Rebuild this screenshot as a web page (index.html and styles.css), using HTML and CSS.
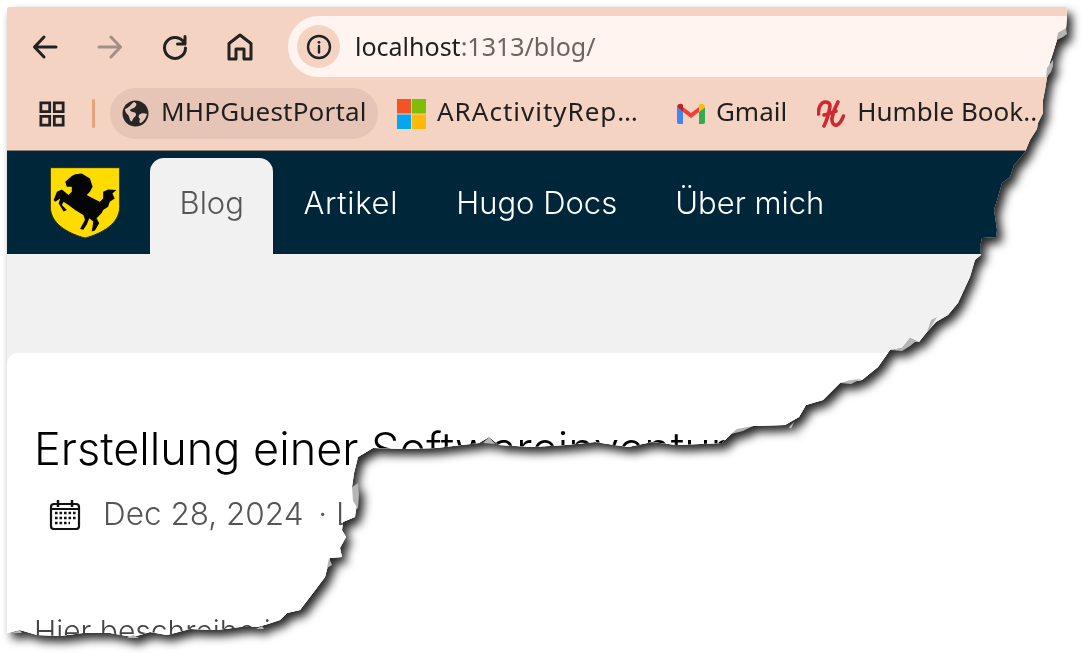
FILE: index.html
```html
<!DOCTYPE html>
<html lang="de">
<head>
<meta charset="utf-8">
<title>Blog</title>
<link rel="stylesheet" href="styles.css">
</head>
<body>
<div class="shadow">
  <div class="torn">
    <div class="sheet">
      <header class="chrome">
        <div class="toolbar">
          <span class="tb-btn"><svg width="30" height="30" viewBox="0 0 30 30"><path class="ic" d="M26 15H5M14 5 4.500 15 14 25"/></svg></span>
          <span class="tb-btn dim"><svg width="30" height="30" viewBox="0 0 30 30"><path class="ic" d="M4 15h21M16 5l9.500 10L16 25"/></svg></span>
          <span class="tb-btn"><svg width="30" height="30" viewBox="0 0 30 30"><path class="ic" d="M24 10.500A10.500 10.500 0 1 0 25.500 16M25 4.500v7.500h-7.500"/></svg></span>
          <span class="tb-btn"><svg width="30" height="30" viewBox="0 0 30 30"><path class="ic" d="M4 27V11.500L15 3l11 8.500V27h-7V17h-8v10Z"/></svg></span>
          <div class="omnibox">
            <span class="site-info"><svg width="26" height="26" viewBox="0 0 26 26"><circle class="ic thin" cx="13" cy="13" r="11"/><path class="ic thin" d="M13 12v6.500"/><circle cx="13" cy="8.300" r="1.400" fill="#222"/></svg></span>
            <span class="url">localhost<span class="url-rest">:1313/blog/</span></span>
          </div>
        </div>
        <div class="bookmarks">
          <span class="apps"><svg width="26" height="26" viewBox="0 0 28 28"><path class="ic thin sq" d="M2 2h9.500v9.500H2zM16.500 2H26v9.500h-9.500zM2 16.500h9.500V26H2zM16.500 16.500H26V26h-9.500z"/></svg></span>
          <span class="sep"></span>
          <span class="bm chip"><svg width="27" height="27" viewBox="0 0 27 27"><circle cx="13.500" cy="13.500" r="13" fill="#262626"/><path d="M3 9c4-1 6-5 9-7 3 1 3 3 1 5-1 2-4 1-5 3 1 3 5 1 6 4 0 3-2 3-3 5-1 3-2 3-3 1-1-3-1-5-3-6-1-1-2-3-2-5ZM17 15c2-2 5-2 8-1-1 4-3 7-6 9-3 0-1-3-1-4-1-1-2-2-1-4Z" fill="#e6c5b6"/></svg><span class="label">MHPGuestPortal</span></span>
          <span class="bm ms"><svg width="29" height="30" viewBox="0 0 29 30"><rect width="14" height="14.500" fill="#f35325"/><rect x="15" width="14" height="14.500" fill="#81bc06"/><rect y="15.500" width="14" height="14.500" fill="#05a6f0"/><rect x="15" y="15.500" width="14" height="14.500" fill="#ffba08"/></svg><span class="label ms-label">ARActivityRep…</span></span>
          <span class="bm gm"><svg width="28" height="22" viewBox="0 0 28 22"><path d="M0 4v15q0 2 2 2h4V9Z" fill="#4285f4"/><path d="M28 4v15q0 2-2 2h-4V9Z" fill="#34a853"/><path d="M6 9v-5l8 6 8-6v5l-8 6Z" fill="#ea4335"/><path d="M0 4q1-4 5-3l1 1v7L0 4Z" fill="#c5221f"/><path d="M28 4q-1-4-5-3l-1 1v7l6-5Z" fill="#fbbc04"/></svg><span class="label">Gmail</span></span>
          <span class="bm hb"><svg width="28" height="28" viewBox="0 0 28 28"><path d="M1.500 14C1 8 4 2 8 2c3 0 5 1 5 4-1 7-3 14-6 20M21 2c-3 5-5 11-6 16-.5 5 2 8 5 7 3-1 5-5 6.500-9M7 15c4-1 9-3 12-4" fill="none" stroke="#cc2a2e" stroke-width="3.600" stroke-linecap="round"/></svg><span class="label">Humble Book..</span></span>
        </div>
      </header>
      <nav class="nav">
        <svg class="logo" width="70" height="72" viewBox="29 21 212 216"><path d="M30 22h210v118c0 50-50 80-105 95-55-15-105-45-105-95Z" fill="#ffdc00" stroke="#2b2a10" stroke-width="3"/><path d="M75 65 95 47l10-5 20-2 25 15 8 25-8 15-10 10 20 10 20 10 10-10v-20l15-7 25 2-12 10 7 15-15 10-5 15-15 10-5 10-15 15 8 15-13 22-10 3 3-15 2-15-12-10-8 20-10 15-10-2 15-28-5-15-25-15-20-15-15-10-5 10 15 15-10 5-15-25 5-15-15 10-5-5 10-25 15-7 20 17 10-10v-15l-15 0Z" fill="#050505"/></svg>
        <a class="tab active">Blog</a>
        <a class="tab wide">Artikel</a>
        <a class="tab">Hugo Docs</a>
        <a class="tab">Über mich</a>
      </nav>
      <main class="main">
        <article class="card">
          <h1 class="title">Erstellung einer Softwareinventur</h1>
          <div class="meta">
            <svg width="32" height="32" viewBox="0 0 32 32"><path d="M2 9q0-3 3-3h22q3 0 3 3v19q0 3-3 3H5q-3 0-3-3Z" fill="none" stroke="#111" stroke-width="2.200"/><path d="M2 11h28" stroke="#111" stroke-width="2"/><path d="M9 2v7M23 2v7" stroke="#111" stroke-width="2.500"/><path d="M6 15h21M6 20h21M6 25h15" stroke="#111" stroke-width="2.600" stroke-dasharray="2.600 1.900"/></svg>
            <span>Dec 28, 2024 <span class="dot">· Lesedauer: 3 Minuten</span></span>
          </div>
          <p class="text">Hier beschreibe ich, wie eine Softwareinventur erstellt wird.</p>
        </article>
      </main>
    </div>
  </div>
  <svg class="slivers" width="1090" height="661" viewBox="0 0 1090 661"><path d="M1066 28l-8 5-1 7 6-3 4-3ZM1053 60l-6 8-1 10 5-6 2-6ZM358 483l-6 4 1 14 5 8 1-14ZM329 558l-2 10 5-3ZM919 342l-9-4-8 10-12 2 12 1 8-5 5-4ZM927 332l4-12 6-3-6 10ZM840 383l11-3 10-1-10 5ZM753 426l-16 3-6 5 12-3ZM789 427l5-5-3 7ZM489 437l-6 6 12 1ZM560 444l-10 2 16-3ZM20 630l-8 3 10 0ZM133 635l-6 3 12 0ZM262 626l-6 3 8 0Z" fill="#b5b5b5"/></svg>
</div>
</body>
</html>
```
FILE: styles.css
```css
* { box-sizing: border-box; }
html, body { margin: 0; height: 100%; background: #fff; overflow: hidden; }
.shadow {
  position: relative;
  width: 1090px;
  height: 661px;
  filter: drop-shadow(5px 6px 5px rgba(0, 0, 0, 0.85));
}
.torn {
  width: 1090px;
  height: 661px;
  padding: 7px 0 0 7px;
  clip-path: polygon(0 0, 1065px 0, 1067px 15px, 1066px 29px, 1058px 33px, 1057px 40px, 1053px 53px, 1050px 62px, 1047px 78px, 1045px 90px, 1043px 100px, 1043px 113px, 1038px 123px, 1037px 129px, 1030px 140px, 1025px 152px, 1020px 158px, 1014px 165px, 1010px 177px, 1002px 183px, 998px 197px, 994px 210px, 997px 230px, 996px 237px, 982px 238px, 980px 247px, 981px 255px, 975px 260px, 970px 277px, 964px 290px, 958px 303px, 948px 315px, 936px 322px, 927px 332px, 919px 342px, 910px 338px, 902px 348px, 890px 350px, 878px 367px, 862px 380px, 840px 383px, 823px 400px, 806px 405px, 799px 417px, 785px 425px, 753px 426px, 732px 433px, 722px 443px, 700px 444px, 677px 445px, 652px 442px, 628px 447px, 595px 442px, 566px 445px, 532px 447px, 499px 445px, 489px 437px, 479px 443px, 436px 448px, 407px 449px, 373px 448px, 358px 457px, 354px 473px, 352px 487px, 358px 497px, 355px 517px, 343px 522px, 342px 530px, 346px 537px, 340px 548px, 342px 557px, 330px 558px, 325px 577px, 313px 593px, 300px 610px, 287px 613px, 280px 620px, 268px 624px, 257px 627px, 240px 627px, 217px 630px, 190px 629px, 167px 635px, 150px 632px, 133px 637px, 110px 633px, 83px 633px, 60px 636px, 37px 635px, 20px 630px, 7px 633px, 0 640px);
}
.sheet { width: 1083px; height: 654px; overflow: hidden; background: #fff; border-top-left-radius: 2px; }

.chrome { background: #f4d3c3; height: 144px; padding-top: 9px; border-bottom: 1px solid #8f8079; font-family: "Noto Sans", sans-serif; color: #1f1f1f; }
.toolbar { display: flex; align-items: center; height: 61px; padding-left: 23px; }
.tb-btn { width: 65px; display: flex; justify-content: flex-start; }
.tb-btn.dim { opacity: 0.38; }
.ic { fill: none; stroke: #222; stroke-width: 3; stroke-linecap: round; stroke-linejoin: round; }
.ic.thin { stroke-width: 2.400; }
.ic.sq { stroke-linecap: butt; stroke-linejoin: miter; stroke-width: 3; }
.omnibox { flex: 1; display: flex; align-items: center; height: 61px; margin-left: -2px; background: #fff4f0; border-radius: 31px 0 0 31px; padding-left: 9px; gap: 15px; }
.site-info { width: 43px; height: 43px; border-radius: 50%; background: #f4d3c3; display: flex; align-items: center; justify-content: center; }
.url { font-size: 25px; padding-bottom: 2px; }
.url-rest { color: #6b6461; }

.bookmarks { display: flex; align-items: center; height: 51px; margin-top: 11px; padding-left: 32px; font-size: 26px; white-space: nowrap; }
.apps { display: flex; width: 53px; }
.sep { width: 3px; height: 29px; background: #e9a07d; border-radius: 2px; }
.bm { display: flex; align-items: center; gap: 12px; }
.label { padding-bottom: 5px; }
.chip { height: 51px; margin-left: 15px; padding: 0 10px 0 12px; background: #e6c5b6; border-radius: 26px; width: 268px; letter-spacing: 0.2px; }
.ms { margin-left: 19px; gap: 11px; }
.ms-label { letter-spacing: 1px; }
.gm { margin-left: 38px; gap: 11px; }
.hb { margin-left: 30px; }

.nav { display: flex; align-items: flex-end; gap: 2px; height: 103px; background: #00263a; font-family: Inter, sans-serif; font-weight: 300; font-size: 31px; color: #fff; }
.logo { align-self: flex-start; margin: 16px 28px 0 43px; flex: none; }
.tab { display: flex; align-items: center; height: 96px; padding: 0 28px 8px; border-radius: 14px 14px 0 0; }
.tab.active { background: #f1f1f1; color: #555; padding: 0 29.500px 8px; }
.tab.wide { letter-spacing: 0.7px; }

.main { background: #f1f1f1; padding-top: 99px; font-family: Inter, sans-serif; }
.card { background: #fff; border-radius: 10px 0 0 0; padding: 66px 27px 0; height: 400px; }
.title { margin: 0; font-size: 45px; line-height: 60px; font-weight: 300; color: #000; white-space: nowrap; }
.meta { display: flex; align-items: center; gap: 22px; margin: 15px 0 0 15px; font-size: 31.500px; font-weight: 300; color: #555; white-space: nowrap; }
.dot { margin-left: 6px; }
.text { margin: 80px 0 0; font-size: 30px; font-weight: 300; color: #444; white-space: nowrap; }

.slivers { position: absolute; left: 0; top: 0; pointer-events: none; }
```
